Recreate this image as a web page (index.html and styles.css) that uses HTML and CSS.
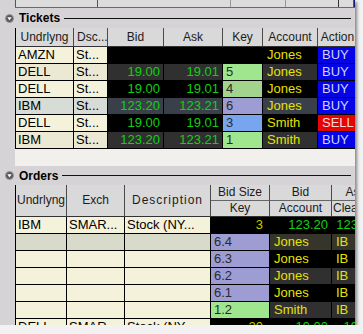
FILE: index.html
```html
<!DOCTYPE html>
<html lang="en">
<head>
    <meta charset="UTF-8">
    <meta name="viewport" content="width=device-width, initial-scale=1.0">
    <title>Tickets and Orders</title>
    <link rel="stylesheet" href="styles.css">
</head>
<body>
    <div class="window">
        <!-- bottom of the panel above, cut off -->
        <div class="strip">
            <span class="seg w82"></span>
            <span class="seg w133"></span>
            <span class="seg w55"></span>
            <span class="seg w53"></span>
            <span class="seg w15"></span>
            <span class="seg seg-buy"></span>
        </div>

        <div class="pane-title">
            <svg class="toggle" width="9" height="9" viewBox="0 0 9 9">
                <circle cx="4.5" cy="4.5" r="4" fill="#575757" stroke="#9a9a9a" stroke-width="1"/>
                <polygon points="2.3,3.2 6.7,3.2 4.5,6.4" fill="#fff"/>
            </svg>
            <span class="title-text">Tickets</span>
            <span class="rule"></span>
        </div>

        <div class="viewport tickets-view">
            <div class="grid tickets head">
                <div class="hcell">Undrlyng</div>
                <div class="hcell left">Dsc...</div>
                <div class="hcell">Bid</div>
                <div class="hcell">Ask</div>
                <div class="hcell">Key</div>
                <div class="hcell">Account</div>
                <div class="hcell">Action</div>
            </div>
            <div class="grid tickets row">
                <div class="cell cream">AMZN</div>
                <div class="cell cream">St...</div>
                <div class="cell dark num"></div>
                <div class="cell dark num"></div>
                <div class="cell dark"></div>
                <div class="cell dark acct">Jones</div>
                <div class="cell buy">BUY</div>
            </div>
            <div class="grid tickets row">
                <div class="cell cream alt">DELL</div>
                <div class="cell cream alt">St...</div>
                <div class="cell grey num">19.00</div>
                <div class="cell grey num">19.01</div>
                <div class="cell key k-green">5</div>
                <div class="cell grey acct">Jones</div>
                <div class="cell buy">BUY</div>
            </div>
            <div class="grid tickets row">
                <div class="cell cream">DELL</div>
                <div class="cell cream">St...</div>
                <div class="cell dark num">19.00</div>
                <div class="cell dark num">19.01</div>
                <div class="cell key k-olive">4</div>
                <div class="cell dark acct">Jones</div>
                <div class="cell buy">BUY</div>
            </div>
            <div class="grid tickets row">
                <div class="cell cream sel">IBM</div>
                <div class="cell cream sel">St...</div>
                <div class="cell slate num">123.20</div>
                <div class="cell slate num">123.21</div>
                <div class="cell key k-lilac">6</div>
                <div class="cell slate acct">Jones</div>
                <div class="cell buy">BUY</div>
            </div>
            <div class="grid tickets row">
                <div class="cell cream">DELL</div>
                <div class="cell cream">St...</div>
                <div class="cell dark num">19.00</div>
                <div class="cell dark num">19.01</div>
                <div class="cell key k-blue">3</div>
                <div class="cell dark acct">Smith</div>
                <div class="cell sell">SELL</div>
            </div>
            <div class="grid tickets row">
                <div class="cell cream alt">IBM</div>
                <div class="cell cream alt">St...</div>
                <div class="cell grey num">123.20</div>
                <div class="cell grey num">123.21</div>
                <div class="cell key k-green">1</div>
                <div class="cell grey acct">Smith</div>
                <div class="cell buy">BUY</div>
            </div>
        </div>

        <div class="pane-title orders-title">
            <svg class="toggle" width="9" height="9" viewBox="0 0 9 9">
                <circle cx="4.5" cy="4.5" r="4" fill="#575757" stroke="#9a9a9a" stroke-width="1"/>
                <polygon points="2.3,3.2 6.7,3.2 4.5,6.4" fill="#fff"/>
            </svg>
            <span class="title-text">Orders</span>
            <span class="rule"></span>
        </div>

        <div class="viewport orders-view">
            <div class="grid orders head two-line">
                <div class="hcell span2">Undrlyng</div>
                <div class="hcell span2">Exch</div>
                <div class="hcell span2 desc">Description</div>
                <div class="hcell upper">Bid Size</div>
                <div class="hcell upper">Bid</div>
                <div class="hcell upper">Ask</div>
                <div class="hcell">Key</div>
                <div class="hcell">Account</div>
                <div class="hcell left clip">Clearing</div>
            </div>
            <div class="grid orders row">
                <div class="cell cream">IBM</div>
                <div class="cell cream">SMAR...</div>
                <div class="cell cream">Stock (NY...</div>
                <div class="cell dark size">3</div>
                <div class="cell dark num">123.20</div>
                <div class="cell dark num">123.20</div>
            </div>
            <div class="grid orders row">
                <div class="cell cream sel-g"></div>
                <div class="cell cream sel-g"></div>
                <div class="cell cream sel-g"></div>
                <div class="cell key k-lilac">6.4</div>
                <div class="cell olive acct">Jones</div>
                <div class="cell olive acct">IB</div>
            </div>
            <div class="grid orders row">
                <div class="cell cream"></div>
                <div class="cell cream"></div>
                <div class="cell cream"></div>
                <div class="cell key k-lilac">6.3</div>
                <div class="cell dark acct">Jones</div>
                <div class="cell dark acct">IB</div>
            </div>
            <div class="grid orders row">
                <div class="cell cream"></div>
                <div class="cell cream"></div>
                <div class="cell cream"></div>
                <div class="cell key k-lilac">6.2</div>
                <div class="cell grey acct">Jones</div>
                <div class="cell grey acct">IB</div>
            </div>
            <div class="grid orders row">
                <div class="cell cream"></div>
                <div class="cell cream"></div>
                <div class="cell cream"></div>
                <div class="cell key k-lilac">6.1</div>
                <div class="cell dark acct">Jones</div>
                <div class="cell dark acct">IB</div>
            </div>
            <div class="grid orders row">
                <div class="cell cream"></div>
                <div class="cell cream"></div>
                <div class="cell cream"></div>
                <div class="cell key k-green">1.2</div>
                <div class="cell grey acct">Smith</div>
                <div class="cell grey acct">IB</div>
            </div>
            <div class="grid orders row">
                <div class="cell cream">DELL</div>
                <div class="cell cream">SMAR...</div>
                <div class="cell cream">Stock (NY...</div>
                <div class="cell dark size">20</div>
                <div class="cell dark num">19.00</div>
                <div class="cell dark num">19.01</div>
            </div>
        </div>
    </div>
</body>
</html>
```

FILE: styles.css
```css
body {
    margin: 0;
    padding: 0;
    background: #f2f2f2;
    font-family: 'Liberation Sans', Arial, sans-serif;
}

.window {
    width: 355px;
    height: 325px;
    overflow: hidden;
    background: #d5d3d6;
    box-shadow: 2px 2px 3px rgba(0, 0, 0, 0.45);
}

/* cut-off panel above */
.strip {
    display: flex;
    height: 7px;
    margin-left: 15px;
    border-bottom: 1px solid #6a6a6a;
    background: #dcdcdc;
}
.seg {
    flex: none;
    height: 100%;
    border-left: 1px solid #555;
    box-sizing: border-box;
}
.w82 { width: 82px; }
.w133 { width: 133px; }
.w55 { width: 55px; border-left-color: #999; }
.w53 { width: 53px; border-left-color: #999; }
.w15 { width: 15px; border-left-color: #333; }
.seg-buy {
    flex: 1;
    background: #1a1a70;
}

.pane-title {
    display: flex;
    align-items: center;
    height: 20px;
    padding-left: 5px;
}
.orders-title {
    height: 19px;
}
.toggle {
    flex: none;
    display: block;
}
.title-text {
    margin-left: 5px;
    font-size: 12px;
    font-weight: bold;
    color: #000;
}
.rule {
    flex: 1;
    height: 1px;
    margin: 0 4px 0 4px;
    background: #111;
}

.viewport {
    margin-left: 15px;
    overflow: hidden;
    background: #f1f0ec;
}
.tickets-view {
    height: 138px;
}
.orders-view {
    height: 140px;
}

.grid {
    display: grid;
    border-left: 1px solid #000;
}
.tickets {
    grid-template-columns: 58px 34px 56px 59px 40px 55px 40px;
}
.orders {
    grid-template-columns: 51px 58px 86px 59px 62px 48px;
}

.hcell,
.cell {
    box-sizing: border-box;
    min-width: 0;
    overflow: hidden;
    white-space: nowrap;
}

.hcell {
    height: 19px;
    line-height: 18px;
    font-size: 12px;
    color: #1c1c1c;
    text-align: center;
    background: #d9d9d9;
    border-right: 1px solid #4a4a4a;
    border-bottom: 1px solid #333;
}
.hcell.left {
    text-align: left;
    padding-left: 3px;
}

.two-line {
    grid-template-rows: 16px 16px;
}
.two-line .hcell {
    height: auto;
    line-height: 15px;
}
.two-line .span2 {
    grid-row: span 2;
    line-height: 31px;
}
.two-line .upper {
    border-bottom-color: #666;
}
.hcell.desc {
    letter-spacing: 1px;
}
.hcell.clip {
    padding-left: 1px;
}

.cell {
    height: 17px;
    line-height: 16px;
    font-size: 13px;
    padding: 0 3px;
    border-right: 1px solid #000;
    border-bottom: 1px solid #000;
}

.cream { background: #f5f2dc; color: #000; padding-left: 2px; }
.cream.alt { background: #ebe9d3; }
.cream.sel { background: #d8dcd6; }
.cream.sel-g { background: #d8dbca; }

.dark { background: #000; }
.grey { background: #303030; }
.slate { background: #3a4049; }
.olive { background: #35352c; }

.num {
    color: #10d010;
    text-align: right;
}
.size {
    color: #c8c800;
    text-align: right;
    padding-right: 6px;
}
.acct {
    color: #e6e200;
    padding-left: 4px;
}

.key {
    color: #2a2a2a;
}
.k-green { background: #9fe68f; }
.k-olive { background: #a2d48e; }
.k-lilac { background: #9d9dd4; }
.k-blue { background: #78a6ee; }

.buy {
    background: #0404e6;
    color: #d2d2ff;
    padding-left: 4px;
}
.sell {
    background: #e40404;
    color: #ffd6d6;
    padding-left: 4px;
}
```
